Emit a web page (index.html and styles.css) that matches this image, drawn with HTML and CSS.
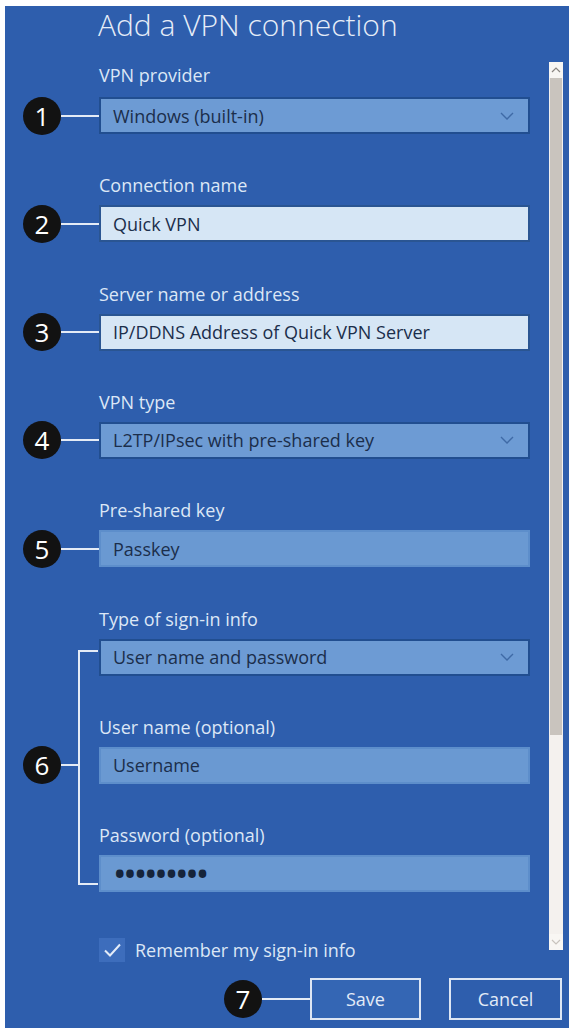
FILE: index.html
```html
<!DOCTYPE html>
<html lang="en">
<head>
<meta charset="utf-8">
<title>Add a VPN connection</title>
<link rel="stylesheet" href="styles.css">
</head>
<body>
<div class="window">
  <h1 class="title">Add a VPN connection</h1>
  <div class="content">
    <div class="form">
      <div class="group">
        <div class="label">VPN provider</div>
        <div class="marker"><span class="badge">1</span><span class="leader"></span></div>
        <div class="field select"><span>Windows (built-in)</span><svg class="chev" viewBox="0 0 14 8" width="14" height="8"><path d="M1 1l6 6 6-6" fill="none" stroke="#3f6aa6" stroke-width="1.4"/></svg></div>
      </div>
      <div class="group">
        <div class="label">Connection name</div>
        <div class="marker"><span class="badge">2</span><span class="leader"></span></div>
        <div class="field text-light">Quick VPN</div>
      </div>
      <div class="group">
        <div class="label">Server name or address</div>
        <div class="marker"><span class="badge">3</span><span class="leader"></span></div>
        <div class="field text-light">IP/DDNS Address of Quick VPN Server</div>
      </div>
      <div class="group">
        <div class="label">VPN type</div>
        <div class="marker"><span class="badge">4</span><span class="leader"></span></div>
        <div class="field select"><span>L2TP/IPsec with pre-shared key</span><svg class="chev" viewBox="0 0 14 8" width="14" height="8"><path d="M1 1l6 6 6-6" fill="none" stroke="#3f6aa6" stroke-width="1.4"/></svg></div>
      </div>
      <div class="group">
        <div class="label">Pre-shared key</div>
        <div class="marker"><span class="badge">5</span><span class="leader"></span></div>
        <div class="field text-mid">Passkey</div>
      </div>
      <div class="group signin">
        <div class="label r1">Type of sign-in info</div>
        <div class="marker bracketed"><span class="badge">6</span><span class="leader short"></span><span class="bracket"></span></div>
        <div class="field select r2"><span>User name and password</span><svg class="chev" viewBox="0 0 14 8" width="14" height="8"><path d="M1 1l6 6 6-6" fill="none" stroke="#3f6aa6" stroke-width="1.4"/></svg></div>
        <div class="label r3 spaced">User name (optional)</div>
        <div class="field text-mid r4">Username</div>
        <div class="label r5 spaced">Password (optional)</div>
        <div class="field text-mid r6"><span class="dots">•••••••••</span></div>
      </div>
      <div class="check-row">
        <span class="checkbox"><svg viewBox="0 0 24 24" width="24" height="24"><path d="M5 12.5l5 5 10-11" fill="none" stroke="#e4ecf8" stroke-width="2"/></svg></span>
        <span class="check-text">Remember my sign-in info</span>
      </div>
    </div>
    <div class="scrollbar">
      <div class="sb-arrow"><svg viewBox="0 0 10 6" width="10" height="6"><path d="M1 5l4-4 4 4" fill="none" stroke="#8a8580" stroke-width="1.2"/></svg></div>
      <div class="sb-thumb"></div>
      <div class="sb-track"></div>
      <div class="sb-arrow"><svg viewBox="0 0 10 6" width="10" height="6"><path d="M1 1l4 4 4-4" fill="none" stroke="#c8c3bd" stroke-width="1.2"/></svg></div>
    </div>
  </div>
  <div class="footer">
    <span class="badge">7</span><span class="leader fixed"></span>
    <button class="btn save" type="button">Save</button>
    <button class="btn cancel" type="button">Cancel</button>
  </div>
</div>
</body>
</html>
```
FILE: styles.css
```css
* { box-sizing: border-box; }
html, body { margin: 0; padding: 0; background: #ffffff; }
body {
  width: 573px;
  height: 1031px;
  overflow: hidden;
  font-family: "Open Sans", "Noto Sans", sans-serif;
}
.window {
  margin: 6px 4px 0 5px;
  width: 564px;
  height: 1022px;
  background: #2e5ead;
  display: flex;
  flex-direction: column;
}
.title {
  margin: 0;
  height: 56px;
  padding: 0 0 0 93px;
  font-size: 30px;
  font-weight: 300;
  line-height: 38px;
  color: #e6edf8;
}
.content {
  display: flex;
  align-items: flex-start;
}
.form {
  width: 525px;
  padding-top: 2px;
}
.group {
  display: grid;
  grid-template-columns: 94px 431px;
  margin-bottom: 40.33px;
}
.label {
  grid-column: 2;
  font-size: 18px;
  line-height: 22px;
  color: #dce7f6;
  margin-bottom: 9px;
}
.group:first-child .label { margin-bottom: 11px; }
.marker {
  grid-column: 1;
  display: flex;
  align-items: center;
  padding-left: 18px;
}
.badge {
  flex: none;
  width: 38px;
  height: 38px;
  margin: -1px 0;
  border-radius: 50%;
  background: #121212;
  color: #ffffff;
  font-size: 26px;
  line-height: 38px;
  text-align: center;
}
.leader {
  flex: 1;
  height: 2px;
  background: #e4ebf6;
}
.leader.short { flex: none; width: 17px; }
.leader.fixed { flex: none; width: 48px; }
.field {
  grid-column: 2;
  height: 37px;
  display: flex;
  align-items: center;
  padding: 0 12px 0 12px;
  font-size: 18px;
  color: #1b2e4b;
  border: 2px solid;
}
.select {
  background: #6d9bd4;
  border-color: #214e90;
  justify-content: space-between;
}
.text-light {
  background: #d6e6f5;
  border-color: #2a5592;
}
.text-mid {
  background: #6a99d2;
  border-color: #5d8ecb;
}
.chev { flex: none; margin-right: 2px; }
.dots {
  font-size: 36px;
  line-height: 20px;
  letter-spacing: -3.2px;
  color: #16243a;
}
.signin .r1 { grid-row: 1; }
.signin .r2 { grid-row: 2; }
.signin .r3 { grid-row: 3; }
.signin .r4 { grid-row: 4; }
.signin .r5 { grid-row: 5; }
.signin .r6 { grid-row: 6; }
.signin .spaced { margin-top: 40.33px; }
.signin { margin-bottom: 0; }
.marker.bracketed {
  grid-row: 2 / 7;
  align-items: center;
}
.bracket {
  flex: none;
  align-self: stretch;
  width: 20px;
  margin: 11px 0 7px;
  border: 2px solid #e4ebf6;
  border-right: none;
}
.check-row {
  display: flex;
  align-items: center;
  margin: 46px 0 0 94px;
}
.checkbox {
  width: 26px;
  height: 24px;
  background: #3d6dbc;
  display: flex;
  align-items: center;
  justify-content: center;
}
.check-text {
  margin-left: 10px;
  font-size: 18px;
  line-height: 22px;
  color: #dce7f6;
}
.scrollbar {
  margin-left: 19px;
  width: 14px;
  height: 888px;
  display: flex;
  flex-direction: column;
  background: #f4f1ee;
}
.sb-arrow {
  height: 16px;
  flex: none;
  display: flex;
  align-items: center;
  justify-content: center;
  background: #f8f6f3;
}
.sb-thumb {
  flex: none;
  height: 657px;
  margin: 0 1px;
  background: #c9c4be;
}
.sb-track { flex: 1; }
.footer {
  margin-top: auto;
  padding: 0 7px 8px 0;
  display: flex;
  align-items: center;
  justify-content: flex-end;
}
.btn {
  height: 42px;
  border: 2px solid #dde6f4;
  font-family: inherit;
  font-size: 18px;
  color: #e3ebf7;
  padding: 0;
}
.save { width: 111px; background: #3466b4; margin-right: 28px; }
.cancel { width: 113px; background: #2e5ead; }
```
